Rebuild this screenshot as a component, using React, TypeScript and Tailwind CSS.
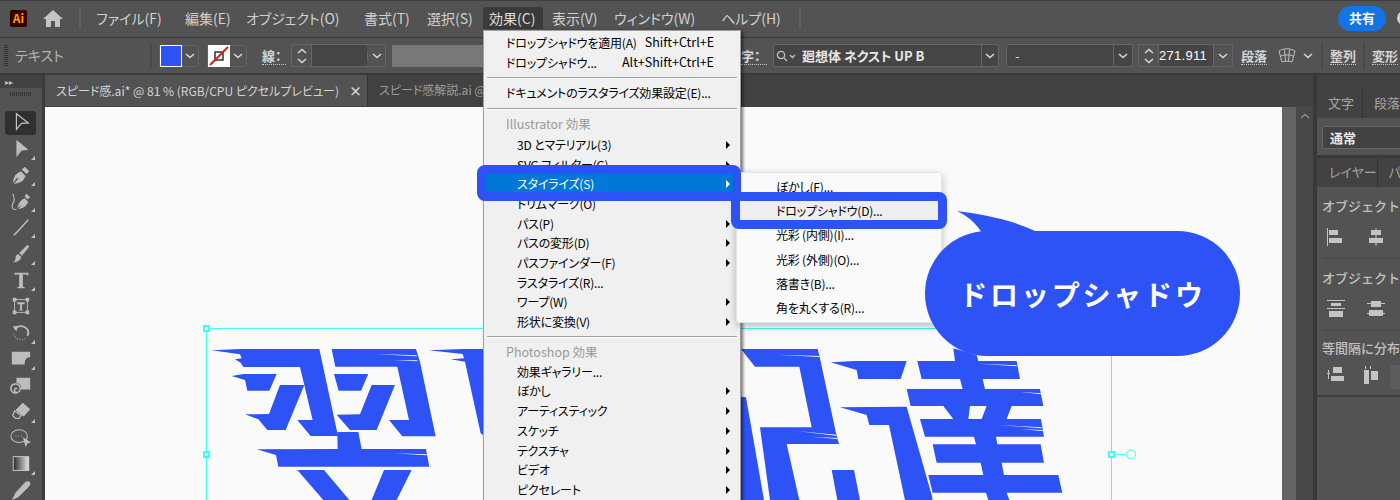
import React from 'react';

type MenuRow =
  | { kind: 'item'; label: string; shortcut?: string; arrow?: boolean; active?: boolean; flush?: boolean }
  | { kind: 'sep' }
  | { kind: 'head'; label: string; h: string };

const menuRows: MenuRow[] = [
  { kind: 'item', label: 'ドロップシャドウを適用(A)', shortcut: 'Shift+Ctrl+E', flush: true },
  { kind: 'item', label: 'ドロップシャドウ...', shortcut: 'Alt+Shift+Ctrl+E', flush: true },
  { kind: 'sep' },
  { kind: 'item', label: 'ドキュメントのラスタライズ効果設定(E)...', flush: true },
  { kind: 'sep' },
  { kind: 'head', label: 'Illustrator 効果', h: 'h-[21px]' },
  { kind: 'item', label: '3D とマテリアル(3)', arrow: true },
  { kind: 'item', label: 'SVG フィルター(G)', arrow: true },
  { kind: 'item', label: 'スタイライズ(S)', arrow: true, active: true },
  { kind: 'item', label: 'トリムマーク(O)' },
  { kind: 'item', label: 'パス(P)', arrow: true },
  { kind: 'item', label: 'パスの変形(D)', arrow: true },
  { kind: 'item', label: 'パスファインダー(F)', arrow: true },
  { kind: 'item', label: 'ラスタライズ(R)...' },
  { kind: 'item', label: 'ワープ(W)', arrow: true },
  { kind: 'item', label: '形状に変換(V)', arrow: true },
  { kind: 'sep' },
  { kind: 'head', label: 'Photoshop 効果', h: 'h-[19px]' },
  { kind: 'item', label: '効果ギャラリー...' },
  { kind: 'item', label: 'ぼかし', arrow: true },
  { kind: 'item', label: 'アーティスティック', arrow: true },
  { kind: 'item', label: 'スケッチ', arrow: true },
  { kind: 'item', label: 'テクスチャ', arrow: true },
  { kind: 'item', label: 'ビデオ', arrow: true },
  { kind: 'item', label: 'ピクセレート', arrow: true },
];

const subItems = ['ぼかし(F)...', 'ドロップシャドウ(D)...', '光彩 (内側)(I)...', '光彩 (外側)(O)...', '落書き(B)...', '角を丸くする(R)...'];

const topMenus = [
  { label: 'ファイル(F)', cls: 'ml-[15px] w-[89px]' },
  { label: '編集(E)', cls: 'w-[61px]' },
  { label: 'オブジェクト(O)', cls: 'w-[118px]' },
  { label: '書式(T)', cls: 'w-[63px]' },
  { label: '選択(S)', cls: 'w-[62px]' },
  { label: '効果(C)', cls: 'w-[63px]', active: true },
  { label: '表示(V)', cls: 'w-[62px]' },
  { label: 'ウィンドウ(W)', cls: 'w-[107px]' },
  { label: 'ヘルプ(H)', cls: 'w-[78px]' },
];

const Chevron = ({ up = false }: { up?: boolean }) => (
  <svg width="12" height="8" viewBox="0 0 12 8" fill="none" stroke="#d6d6d6" strokeWidth="1.6">
    <path d={up ? 'M2 6l4-3.5L10 6' : 'M2 2l4 3.5L10 2'} />
  </svg>
);

const Spinner = () => (
  <div className="flex h-full w-[20px] flex-col items-center justify-center gap-[2px] border-r border-[#656565]">
    <Chevron up />
    <Chevron />
  </div>
);

const Dotted = ({ text, cls }: { text: string; cls: string }) => (
  <span className={`border-b border-dotted border-[#c8c8c8] text-[13px] leading-[17px] font-bold text-[#d4d4d4] ${cls}`}>{text}</span>
);

const tools: { drop: boolean; icon: React.ReactNode }[] = [
  { drop: false, icon: <path d="M7 3l13 10-7.5.5L7 20z" fill="none" stroke="#c4c4c4" strokeWidth="1.3" /> },
  { drop: true, icon: <path d="M7 3l13 11-7.5 1L7 22z" /> },
  { drop: true, icon: <path d="M3 21c.5-5 2-9 5-11l4-2 5 5-2 4c-2 3-6 4-11 5l5-6-1-1zM13 6l3-3 5 5-3 3z" /> },
  { drop: true, icon: <><path d="M8 20c1-5 3-8 6-10l2-1 4 4-2 3c-2 3-5 4-9 5l4-5zM16 7l2-3 4 4-3 2z" /><path d="M7 21C3 22 1 19 3 15c2-3 2-7 0-11" fill="none" stroke="#bdbdbd" strokeWidth="1.2" /></> },
  { drop: true, icon: <path d="M4 21C9 17 14 10 20 4" fill="none" stroke="#bdbdbd" strokeWidth="1.6" /> },
  { drop: true, icon: <path d="M19 2l2 2-8 10-3-3zM9 12l3 3c0 4-4 6-9 6 2-1 3-2 3-4 0-3 1-4 3-5z" /> },
  { drop: true, icon: <path d="M5 4h15v3h-1l-1-1h-4v13l2 1v1H8v-1l2-1V6H6L5 7z" /> },
  { drop: false, icon: <><path d="M5 5h14v14H5z" fill="none" stroke="#bdbdbd" strokeWidth="1" /><path d="M3 3h4v4H3zM17 3h4v4h-4zM3 17h4v4H3zM17 17h4v4h-4zM8 8h8v2h-3v6h1v1h-4v-1h1v-6H8z" /></> },
  { drop: true, icon: <><path d="M5 8c3-4 9-5 13-1 3 3 2 6 1 8" fill="none" stroke="#bdbdbd" strokeWidth="2" /><path d="M3 5l6-1-2 6z" /><path d="M4 13c1 5 6 8 13 5" fill="none" stroke="#8f8f8f" strokeWidth="1.5" strokeDasharray="1.5 1.5" /></> },
  { drop: true, icon: <path d="M2 4h20v6c-3 0-6 1-6 8H2z" /> },
  { drop: false, icon: <><path d="M7 4h15v13H12c1-5-2-7-5-7z" /><path d="M7 21c-4 0-6-2-6-5s2-5 5-5 6 2 5 6-5 4-6 2 1-4 3-3" fill="none" stroke="#bdbdbd" strokeWidth="1.7" /></> },
  { drop: true, icon: <><path d="M14 3l8 7-7 8-3-2-6-5z" /><path d="M5 12l7 5-2 3H6l-3-3z" fill="none" stroke="#bdbdbd" strokeWidth="1.3" /></> },
  { drop: false, icon: <><ellipse cx="10" cy="10" rx="9" ry="7" fill="none" stroke="#bdbdbd" strokeWidth="1.1" /><path d="M14 11l9 6-4 1-2 4z" /><path d="M6 10h1M9 10h1M12 10h1" stroke="#bdbdbd" /></> },
  { drop: true, icon: <rect x="3.5" y="4" width="17" height="15" fill="url(#grad)" stroke="#d0d0d0" strokeWidth="1" /> },
  { drop: false, icon: <path d="M2 23l4-8L16 4c2-2 5-2 6 0 1 2-1 4-3 6L9 20z" /> },
];

const art = [
  '65,91 152,87 388,87 444,348 362,348 322,300 368,300 330,141 160,141 152,128 135,118 155,115 150,103',
  '125,168 160,162 260,162 238,212 172,212 165,180',
  '270,195 343,195 287,330 232,330 205,298 165,283 237,282',
  '425,87 678,87 690,125 737,349 637,349 597,300 657,300 622,140 436,140',
  '432,162 535,162 513,212 446,212',
  '545,195 615,195 560,330 480,330 440,284 510,283',
  '442,336 505,336 515,387 708,387 718,440 265,440 258,405 200,388 443,387',
  '322,450 402,450 478,540 400,540',
  '582,450 665,450 620,540 545,540',
  '716,91 818,87 880,87 880,345 872,340 825,125 782,118 822,115 818,102',
];

const art2 = [
  '3,87 233,87 240,115 288,340 297,372 140,372 178,540 90,540 60,322 215,322 178,140 45,140',
  '0,230 18,232 72,540 0,540',
  '275,450 342,450 360,540 292,540',
  '272,127 345,123 500,123 482,177 355,177 350,150',
  '300,262 500,260 575,525 578,540 495,540 447,315 388,315 380,285',
  '532,123 645,123 640,85 710,105 715,123 830,123 840,177 728,177 735,207 900,207 910,258 815,258 800,297 903,297 912,350 768,350 772,373 902,373 912,428 785,428 792,465 955,465 967,518 800,518 808,540 745,540 738,518 578,518 565,465 730,465 722,428 590,428 578,373 708,373 702,350 555,350 540,297 640,297 610,258 512,258 500,207 668,207 660,177 545,177',
];

const artCuts = [
  '690,258 740,258 725,297 685,297',
  '110,104 238,108 238,111',
  '170,333 288,344 288,347',
  '215,350 292,354 292,357',
  '715,131 830,136 830,139',
  '840,216 905,220 905,223',
  '775,315 905,322 905,325',
  '840,327 908,330 908,333',
];

const artCuts1 = ['550,102 680,106 680,109', '610,120 682,121 682,124', '610,400 710,403 710,406'];

const Artwork = () => (
  <svg className="absolute left-0 top-0" width="1237" height="393" viewBox="45 107 1237 393" aria-hidden="true">
    <g transform="translate(190 320) scale(0.3333)" fill="#2d52f5">
      {art.map(p => <polygon key={p} points={p} />)}
      {artCuts1.map(p => <polygon key={p} points={p} fill="#fafafa" />)}
    </g>
    <g transform="translate(740 320) scale(0.3333)" fill="#2d52f5">
      {art2.map(p => <polygon key={p} points={p} />)}
      {artCuts.map(p => <polygon key={p} points={p} fill="#fafafa" />)}
    </g>
    <g fill="none" stroke="#3ffcf6" strokeWidth="1">
      <path d="M206.5 328.5H1111.5V500M206.5 328.5V500M1111.5 454.5H1126" />
      <circle cx="1131" cy="454.5" r="4.5" fill="#fafafa" />
    </g>
    <g fill="#fafafa" stroke="#3ffcf6" strokeWidth="2">
      <rect x="204" y="326" width="5" height="5" />
      <rect x="204" y="452" width="5" height="5" />
      <rect x="1109" y="452" width="5" height="5" />
    </g>
  </svg>
);

const Bars = ({ d }: { d: string }) => (
  <svg className="shrink-0" width="20" height="20" viewBox="0 0 20 20" fill="#c4c4c4"><path d={d} /></svg>
);

export default function App() {
  return (
    <div className="relative flex h-[500px] w-[1400px] flex-col overflow-hidden bg-[#535353] font-['Noto_Sans_CJK_JP','Liberation_Sans',sans-serif] [font-feature-settings:'palt']">
      {/* menu bar */}
      <div className="flex h-[38px] shrink-0 items-center border-t border-t-[#3d3d3d] border-b border-b-[#383838] bg-[#535353] pb-[2px]">
        <div className="ml-[10px] flex h-[17px] w-[17px] items-center justify-center rounded-[2px] bg-[#330000] text-[12px] font-bold leading-none text-[#ff9a00]">Ai</div>
        <svg className="ml-[16px]" width="20" height="18" viewBox="0 0 20 18" fill="#c4c4c4"><path d="M10 1L0 10h3v8h5v-6h4v6h5v-8h3z" /></svg>
        <div className="ml-[16px] h-[22px] w-[2px] bg-[#5e5e5e]" />
        {topMenus.map(m => (
          <div key={m.label} className={`flex h-[22px] items-center ${m.cls}`}>
            <span className={`flex h-[22px] items-center rounded-t-[3px] text-[14px] whitespace-nowrap ${m.active ? '-ml-[6px] w-[60px] bg-[#3a3a3a] pl-[6px] text-[#dcdcdc]' : 'text-[#d0d0d0]'}`}>{m.label}</span>
          </div>
        ))}
        <div className="h-[22px] w-[2px] bg-[#5e5e5e]" />
        <div className="ml-auto mr-[14px] flex h-[25px] w-[48px] items-center justify-center rounded-full bg-[#1473e6] text-[13px] font-bold text-white">共有</div>
      </div>

      {/* control bar */}
      <div className="flex h-[37px] shrink-0 items-center border-b-2 border-b-[#3a3a3a] bg-[#535353]">
        <div className="ml-[4px] h-[22px] w-[4px] bg-[repeating-linear-gradient(to_bottom,#333_0,#333_1px,transparent_1px,transparent_2px)]" />
        <span className="ml-[7px] w-[135px] text-[14px] text-[#b4b4b4]">テキスト</span>
        <div className="h-[26px] w-[2px] bg-[#484848]" />
        <div className="ml-[7px] flex h-[22px] w-[40px] items-center rounded-[2px] border border-[#656565]">
          <div className="h-[22px] w-[22px] border border-white bg-[#2d52f5]" />
          <div className="flex flex-1 justify-center"><Chevron /></div>
        </div>
        <div className="ml-[8px] flex h-[22px] w-[40px] items-center rounded-[2px] border border-[#656565]">
          <svg width="22" height="22" viewBox="0 0 22 22">
            <rect width="22" height="22" fill="#fff" />
            <rect x="7" y="7" width="8" height="8" fill="none" stroke="#222" strokeWidth="1.4" />
            <path d="M2 20L20 2" stroke="#e8131f" strokeWidth="2" />
          </svg>
          <div className="flex flex-1 justify-center"><Chevron /></div>
        </div>
        <Dotted text="線：" cls="ml-[15px] w-[24px]" />
        <div className="ml-[5px] flex h-[23px] w-[95px] items-center rounded-[2px] border border-[#656565]">
          <Spinner />
          <div className="h-full w-[55px] bg-[#454545]" />
          <div className="flex flex-1 justify-center border-l border-[#656565]"><Chevron /></div>
        </div>
        <div className="ml-[6px] h-[22px] w-[330px] bg-[#787878]" />
        <Dotted text="字：" cls="ml-[19px] w-[26px]" />
        <div className="ml-[6px] flex h-[23px] w-[226px] items-center rounded-[2px] border border-[#656565] bg-[#454545]">
          <svg className="ml-[1px]" width="22" height="14" viewBox="0 0 22 14" fill="none" stroke="#c4c4c4" strokeWidth="1.3">
            <circle cx="6" cy="6" r="3.6" /><path d="M9 9l3 3M15 6l2.5 2.5L20 6" />
          </svg>
          <span className="ml-[5px] w-[179px] text-[13px] font-bold whitespace-nowrap text-[#e8e8e8]">廻想体 ネクスト UP B</span>
          <div className="flex h-full flex-1 items-center justify-center border-l border-[#656565]"><Chevron /></div>
        </div>
        <div className="ml-[7px] flex h-[23px] w-[127px] items-center rounded-[2px] border border-[#656565] bg-[#454545]">
          <span className="ml-[8px] w-[98px] text-[13px] text-[#dcdcdc]">-</span>
          <div className="flex h-full flex-1 items-center justify-center border-l border-[#656565]"><Chevron /></div>
        </div>
        <div className="ml-[5px] flex h-[23px] w-[95px] items-center rounded-[2px] border border-[#656565]">
          <Spinner />
          <span className="h-full w-[54px] bg-[#454545] text-[13px] leading-[21px] tracking-[0.3px] text-white font-['Liberation_Sans',sans-serif]">271.911</span>
          <div className="flex h-full flex-1 items-center justify-center border-l border-[#656565]"><Chevron /></div>
        </div>
        <Dotted text="段落" cls="ml-[8px]" />
        <svg className="ml-[11px]" width="18" height="16" viewBox="0 0 18 16" fill="none" stroke="#bdbdbd" strokeWidth="1">
          <path d="M1 3C6 0 12 0 17 3l-3 11c-3-1-7-1-10 0zM6.500 1.500L7.500 13M11.500 1.500L10.500 13M2.500 8c4-1.500 9-1.500 13 0" />
        </svg>
        <div className="ml-[6px]"><Chevron /></div>
        <div className="ml-[7px] h-[26px] w-[2px] bg-[#484848]" />
        <Dotted text="整列" cls="ml-[7px]" />
        <div className="ml-[7px] h-[26px] w-[2px] bg-[#484848]" />
        <Dotted text="変形" cls="ml-[7px]" />
      </div>

      {/* workspace */}
      <div className="flex min-h-0 flex-1">
        <div className="flex w-[45px] shrink-0 flex-col overflow-hidden border-r-[3px] border-r-[#3c3c3c] bg-[#535353]">
          <div className="flex h-[13px] shrink-0 items-center bg-[#424242] pl-[5px] text-[8px] leading-none text-[#c0c0c0]">▸▸</div>
          <div className="flex h-[21px] shrink-0 justify-center pt-[4px]">
            <div className="h-[4px] w-[22px] bg-[repeating-linear-gradient(to_right,#333_0,#333_1px,transparent_1px,transparent_2px)]" />
          </div>
          {tools.map((t, i) => (
            <div key={i} className="relative flex h-[26.3px] shrink-0 items-center justify-center">
              {i === 0 && <div className="absolute left-[5px] top-[2px] h-[24px] w-[31px] rounded-[3px] bg-[#303030]" />}
              <svg className="relative" width="22" height="22" viewBox="0 0 24 24" fill="#bdbdbd">
                <defs>
                  <linearGradient id="grad" x1="0" x2="1" y1="0" y2="0">
                    <stop offset="0" stopColor="#2a2a2a" />
                    <stop offset="1" stopColor="#e8e8e8" />
                  </linearGradient>
                </defs>
                {t.icon}
              </svg>
              {t.drop && <div className="absolute bottom-[2px] right-[7px] h-0 w-0 border-b-[4px] border-l-[4px] border-b-[#c4c4c4] border-l-transparent" />}
            </div>
          ))}
        </div>

        <div className="flex w-[1268px] shrink-0 flex-col">
          <div className="flex h-[32px] shrink-0 bg-[#424242]">
            <div className="flex h-[31px] w-[322px] items-center bg-[#535353] pl-[11px] text-[12px] whitespace-nowrap text-[#d4d4d4]">
              <span className="w-[293px]">スピード感.ai* @ 81 % (RGB/CPU ピクセルプレビュー)</span>
              <span className="text-[13px] font-bold text-[#d8d8d8]">×</span>
            </div>
            <div className="h-[31px] w-[1px] bg-[#333]" />
            <span className="ml-[11px] text-[12px] leading-[30px] whitespace-nowrap text-[#9c9c9c]">スピード感解説.ai @</span>
          </div>
          <div className="flex min-h-0 flex-1">
            <div className="relative w-[1237px] shrink-0 bg-[#fafafa]">
              <Artwork />
            </div>
            <div className="w-[14px] shrink-0 bg-[#646464]" />
            <div className="flex flex-1 justify-center bg-[#484848] pt-[6px]">
              <svg width="10" height="6" viewBox="0 0 10 6" fill="none" stroke="#8c8c8c" strokeWidth="1.5"><path d="M1 5l4-3.500L9 5" /></svg>
            </div>
          </div>
        </div>

        {/* right panels */}
        <div className="flex min-w-0 flex-1 flex-col overflow-hidden border-l-[4px] border-l-[#383838] bg-[#535353]">
          <div className="h-[13px] shrink-0 bg-[#424242]" />
          <div className="flex h-[30px] shrink-0 bg-[#424242] text-[13px] leading-[29px] text-[#a4a4a4]">
            <span className="w-[46px] border-r border-[#333] pl-[11px]">文字</span>
            <span className="pl-[11px] whitespace-nowrap">段落</span>
          </div>
          <div className="h-[37px] shrink-0 pl-[5px] pt-[8px]">
            <div className="h-[23px] w-[90px] rounded-[3px] border border-[#656565] bg-[#424242] pl-[7px] text-[13px] leading-[21px] font-bold text-[#e8e8e8]">通常</div>
          </div>
          <div className="h-[3px] shrink-0 bg-[#3a3a3a]" />
          <div className="flex h-[29px] shrink-0 bg-[#424242] text-[13px] leading-[28px] text-[#a4a4a4]">
            <span className="w-[61px] border-r border-[#333] pl-[12px] whitespace-nowrap">レイヤー</span>
            <span className="pl-[11px]">パ</span>
          </div>
          <div className="flex h-[210px] shrink-0 flex-col overflow-hidden border-b-2 border-b-[#3f3f3f] pl-[5px] text-[13px] font-medium whitespace-nowrap text-[#c0c0c0] [font-feature-settings:normal]">
            <span className="mt-[9px] h-[20px] leading-[20px]">オブジェクト</span>
            <div className="mt-[11px] flex h-[20px] gap-[20px] pl-[4px]">
              <Bars d="M1 1h1v18H1zM3 3h9v5H3zM3 11h13v5H3z" />
              <Bars d="M9.500 1h1v18h-1zM5 3h10v5H5zM3 11h14v5H3z" />
            </div>
            <div className="mt-[10px] h-[2px] w-[90px] bg-[#4a4a4a]" />
            <span className="mt-[9px] h-[20px] leading-[20px]">オブジェクト</span>
            <div className="mt-[11px] flex h-[20px] gap-[20px] pl-[4px]">
              <Bars d="M1 1h18v1H1zM5 4h10v3H5zM1 9h18v1H1zM3 12h14v6H3z" />
              <Bars d="M1 4h18v1H1zM5 2h10v6H5zM1 14h18v1H1zM3 11h14v6H3z" />
            </div>
            <div className="mt-[10px] h-[2px] w-[90px] bg-[#4a4a4a]" />
            <span className="mt-[7px] h-[20px] leading-[20px]">等間隔に分布</span>
            <div className="mt-[7px] flex h-[20px] gap-[16px] pl-[4px]">
              <Bars d="M1 8h3v1H1zM2 5h1v9H2zM7 2h9v6H7zM5 11h13v5H5z" />
              <Bars d="M3 1h1v3H3zM8 1h1v3H8zM2 5h5v14H2zM9 6h7v9H9z" />
              <div className="-ml-[8px] h-[24px] w-[20px] shrink-0 rounded-[2px] bg-[#5c5c5c]" />
            </div>
          </div>
        </div>
      </div>

      {/* effect menu */}
      <div className="absolute left-[483px] top-[30px] h-[490px] w-[258px] border border-[#a0a0a0] bg-[#f0f0f0] px-[2px] pt-[2px] text-[12px] tracking-[-0.2px] text-black shadow-[2px_1px_3px_rgba(0,0,0,0.55)]">
        {menuRows.map((r, i) => {
          if (r.kind === 'sep') {
            return (
              <div key={i} className="flex h-[11px] items-center px-[1px]">
                <div className="h-[2px] w-full border-t border-t-[#a0a0a0] border-b border-b-white" />
              </div>
            );
          }
          if (r.kind === 'head') {
            return <div key={i} className={`flex items-center pl-[20px] text-[12.5px] tracking-normal text-[#9a9a9a] ${r.h}`}>{r.label}</div>;
          }
          return (
            <div key={i} className={`relative flex h-[19.7px] items-center whitespace-nowrap ${r.flush ? 'pl-[20px]' : 'pl-[31px]'} ${r.active ? 'bg-[#0078d7] text-white' : ''}`}>
              {r.label}
              {r.shortcut && <span className="absolute right-[24px] text-[12.5px] tracking-normal">{r.shortcut}</span>}
              {r.arrow && <span className={`absolute right-[8px] h-0 w-0 border-y-[4px] border-l-[4px] border-y-transparent ${r.active ? 'border-l-white' : 'border-l-black'}`} />}
            </div>
          );
        })}
      </div>

      {/* stylize submenu */}
      <div className="absolute left-[736px] top-[172px] h-[151px] w-[206px] rounded-[3px] border border-[#e4e4e4] bg-[#fafafa] pt-[2px] text-[12px] tracking-[-0.2px] text-black shadow-[0_3px_8px_rgba(0,0,0,0.25)]">
        {subItems.map((s, i) => (
          <div key={s} className={`mx-[3px] flex h-[24.2px] items-center pl-[36px] ${i === 1 ? 'bg-[#eeeeee]' : ''}`}>{s}</div>
        ))}
      </div>

      {/* annotation rings */}
      <div className="absolute left-[477px] top-[165px] h-[36px] w-[264px] rounded-[8px] border-[9px] border-r-[7px] border-[#2d52f5]" />
      <div className="absolute left-[731px] top-[192px] h-[37px] w-[216px] rounded-[8px] border-[9px] border-[#2d52f5]" />

      {/* balloon */}
      <svg className="absolute left-[950px] top-[205px]" width="100" height="40" viewBox="0 0 100 40" fill="#2d52f5">
        <path d="M7 6C30 9 60 14 85 26V34H35C30 22 20 12 7 6z" />
      </svg>
      <div className="absolute left-[925px] top-[231px] flex h-[125px] w-[315px] items-center justify-center rounded-full bg-[#2d52f5] text-[28px] font-bold tracking-[2.8px] text-white [font-feature-settings:normal]">
        ドロップシャドウ
      </div>
      <div className="absolute left-[1397px] top-[11px] h-[14px] w-[14px] rounded-full bg-[#cfcfcf]" />
    </div>
  );
}
